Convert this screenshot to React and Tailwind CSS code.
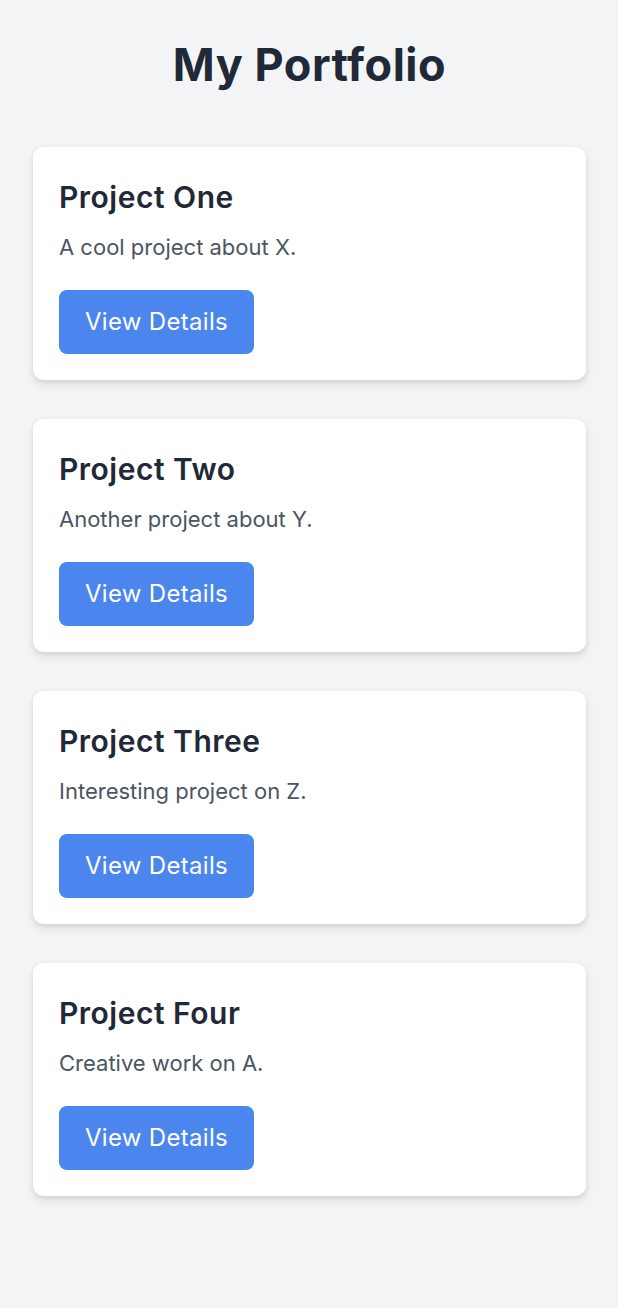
import React from "react";

const projects = [
  { title: "Project One", desc: "A cool project about X." },
  { title: "Project Two", desc: "Another project about Y." },
  { title: "Project Three", desc: "Interesting project on Z." },
  { title: "Project Four", desc: "Creative work on A." },
];

export default function App() {
  return (
    <div
      className="min-h-[1308px] bg-[#f3f4f6] pl-[33px] pr-[32px] pt-[41px]"
      style={{ fontFamily: "Inter, 'Noto Sans', sans-serif" }}
    >
      <h1 className="text-center text-[45px] leading-[48px] font-bold tracking-[0.5px] text-[#1f2937]">
        My Portfolio
      </h1>
      <div className="mt-[58px] flex flex-col gap-[39px]">
        {projects.map((p) => (
          <div
            key={p.title}
            className="rounded-[11px] bg-white px-[26px] pt-[32px] pb-[26px] shadow-[0_4px_10px_rgba(0,0,0,0.1),0_2px_4px_rgba(0,0,0,0.06)]"
          >
            <h2 className="text-[30px] leading-[36px] font-semibold tracking-[0.5px] text-[#1f2937]">
              {p.title}
            </h2>
            <p className="mt-[17px] text-[22px] leading-[30px] text-[#4b5563]">
              {p.desc}
            </p>
            <button className="mt-[28px] h-[64px] rounded-[8px] bg-[#4a86ee] px-[26px] text-[24px] tracking-[0.3px] text-white">
              View Details
            </button>
          </div>
        ))}
      </div>
    </div>
  );
}
